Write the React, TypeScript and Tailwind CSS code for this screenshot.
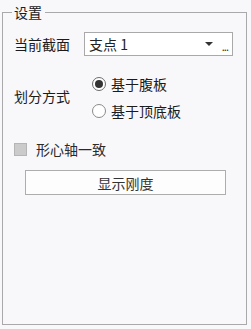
export default function App() {
  return (
    <div
      className="w-[251px] h-[329px] bg-[#f8f7f9] pt-[2px] pl-[2px] text-[14px] text-[#1b1b1b]"
      style={{ fontFamily: '"Noto Sans CJK SC", "Noto Sans", sans-serif' }}
    >
      <fieldset className="w-[245px] h-[323px] border border-[#a9a8ab] pl-[9px] pr-[12px]">
        <legend className="pl-[2px] pr-[3px] leading-[20px]">设置</legend>

        {/* 当前截面 */}
        <div className="flex items-center mt-[10px] pl-[2px]">
          <span className="w-[70px] leading-[20px]">当前截面</span>
          <div className="flex items-center w-[149px] h-[24px] bg-white border border-[#a9a9a9] pl-[4px] pr-[2px]">
            <span className="flex-1 leading-[20px] text-[#222]">支点 1</span>
            <svg width="8" height="4" viewBox="0 0 8 4" className="mr-[9px]">
              <polygon points="0,0 8,0 4,4" fill="#333" />
            </svg>
            <span className="text-[11px] leading-[11px] tracking-[-1px] mt-[4px] mr-[2px] text-[#333]">...</span>
          </div>
        </div>

        {/* 划分方式 */}
        <div className="flex items-center mt-[18px] pl-[2px]">
          <span className="w-[78px] leading-[20px] mb-[4px]">划分方式</span>
          <div className="flex flex-col gap-[7px]">
            <div className="flex items-center gap-[5px]">
              <span className="w-[14px] h-[14px] rounded-full border border-[#6b6b6b] bg-white flex items-center justify-center">
                <span className="w-[8px] h-[8px] rounded-full bg-[#333]" />
              </span>
              <span className="leading-[20px]">基于腹板</span>
            </div>
            <div className="flex items-center gap-[5px]">
              <span className="w-[14px] h-[14px] rounded-full border border-[#8a8a8a] bg-white" />
              <span className="leading-[20px]">基于顶底板</span>
            </div>
          </div>
        </div>

        {/* 形心轴一致 */}
        <div className="flex items-center mt-[18px] pl-[2px] gap-[9px]">
          <span className="w-[13px] h-[13px] bg-[#cbcbcb] border border-[#b5b5b5]" />
          <span className="leading-[20px] text-[#2a2a2a]">形心轴一致</span>
        </div>

        {/* 显示刚度 */}
        <div className="mt-[11px] pl-[13px]">
          <button className="w-[201px] h-[25px] bg-[#fdfdfd] border border-[#adadad] text-[14px] leading-[20px] text-[#333]">
            显示刚度
          </button>
        </div>
      </fieldset>
    </div>
  );
}
